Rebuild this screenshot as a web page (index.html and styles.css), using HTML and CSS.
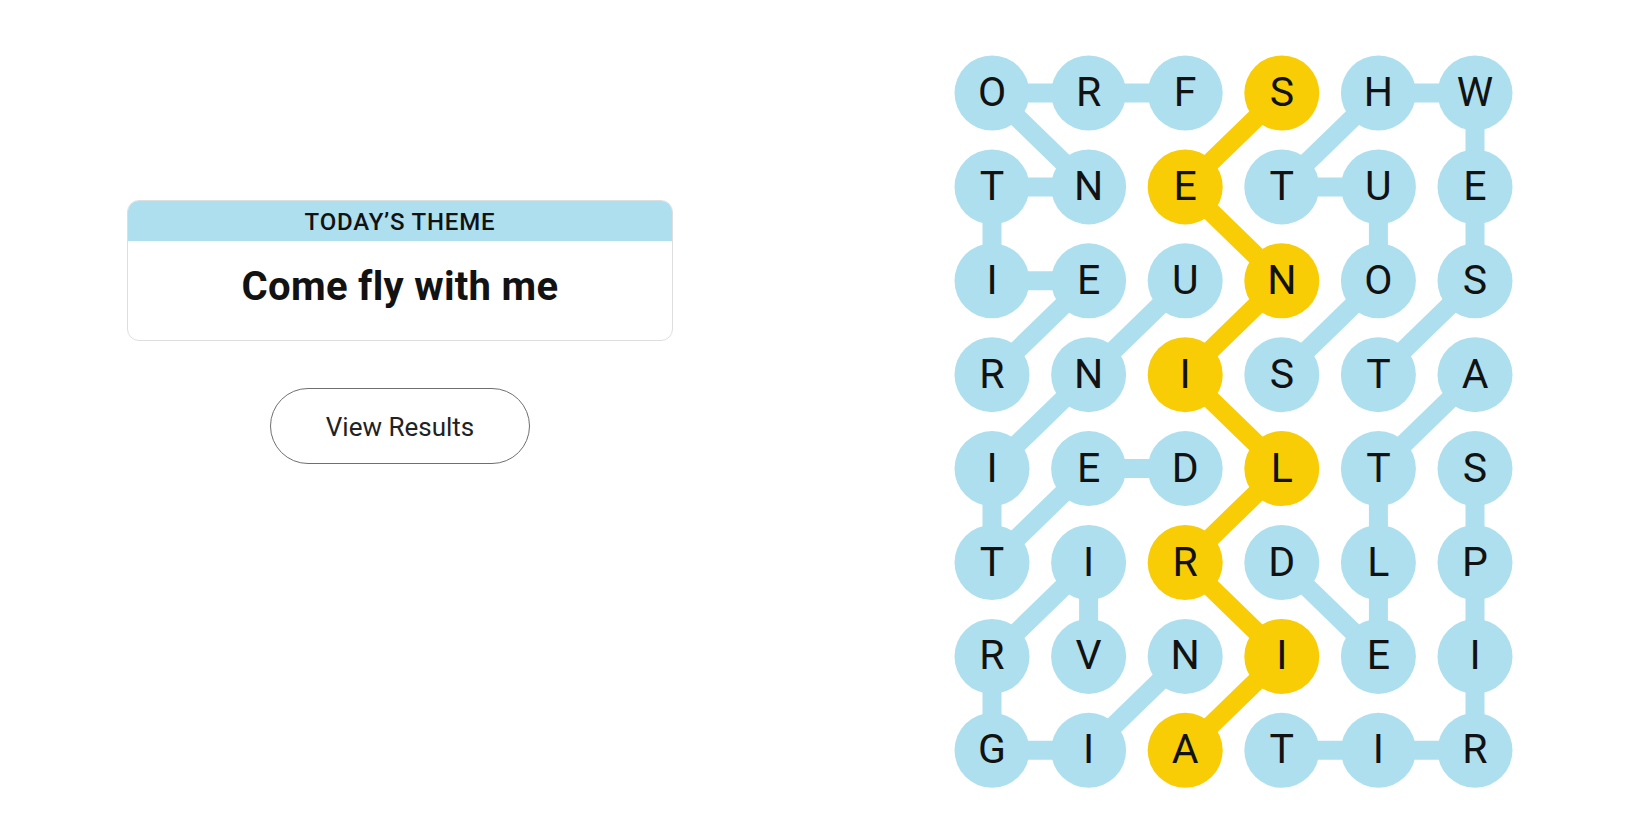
FILE: index.html
```html
<!DOCTYPE html>
<html lang="en">
<head>
    <meta charset="UTF-8">
    <meta name="viewport" content="width=device-width, initial-scale=1.0">
    <title>Strands</title>
    <link rel="stylesheet" href="styles.css">
</head>
<body>

    <div class="page">

        <div class="side">
            <div class="theme">
                <div class="theme-head">TODAY’S THEME</div>
                <div class="theme-body">Come fly with me</div>
            </div>
            <button class="results">View Results</button>
        </div>

        <svg class="board" width="567" height="740" viewBox="0 0 567 740">
            <!-- paths of found words -->
            <g class="path">
                <polyline points="235.2,41 138.6,41 42,41 138.6,134.9 42,134.9 42,228.8 138.6,228.8 42,322.7"/>
                <polyline points="235.2,228.8 138.6,322.7 42,416.6 42,510.5 138.6,416.6 235.2,416.6"/>
                <polyline points="138.6,604.4 138.6,510.5 42,604.4 42,698.3 138.6,698.3 235.2,604.4"/>
                <polyline points="331.8,322.7 428.4,228.8 428.4,134.9 331.8,134.9 428.4,41 525,41 525,134.9 525,228.8 428.4,322.7"/>
                <polyline points="525,416.6 525,510.5 525,604.4 525,698.3 428.4,698.3 331.8,698.3"/>
                <polyline points="331.8,510.5 428.4,604.4 428.4,510.5 428.4,416.6 525,322.7"/>
            </g>
            <g class="path span">
                <polyline points="235.2,698.3 331.8,604.4 235.2,510.5 331.8,416.6 235.2,322.7 331.8,228.8 235.2,134.9 331.8,41"/>
            </g>

            <g class="dots">
                <circle cx="42" cy="41" r="37.5"/>
                <circle cx="138.6" cy="41" r="37.5"/>
                <circle cx="235.2" cy="41" r="37.5"/>
                <circle class="span" cx="331.8" cy="41" r="37.5"/>
                <circle cx="428.4" cy="41" r="37.5"/>
                <circle cx="525" cy="41" r="37.5"/>

                <circle cx="42" cy="134.9" r="37.5"/>
                <circle cx="138.6" cy="134.9" r="37.5"/>
                <circle class="span" cx="235.2" cy="134.9" r="37.5"/>
                <circle cx="331.8" cy="134.9" r="37.5"/>
                <circle cx="428.4" cy="134.9" r="37.5"/>
                <circle cx="525" cy="134.9" r="37.5"/>

                <circle cx="42" cy="228.8" r="37.5"/>
                <circle cx="138.6" cy="228.8" r="37.5"/>
                <circle cx="235.2" cy="228.8" r="37.5"/>
                <circle class="span" cx="331.8" cy="228.8" r="37.5"/>
                <circle cx="428.4" cy="228.8" r="37.5"/>
                <circle cx="525" cy="228.8" r="37.5"/>

                <circle cx="42" cy="322.7" r="37.5"/>
                <circle cx="138.6" cy="322.7" r="37.5"/>
                <circle class="span" cx="235.2" cy="322.7" r="37.5"/>
                <circle cx="331.8" cy="322.7" r="37.5"/>
                <circle cx="428.4" cy="322.7" r="37.5"/>
                <circle cx="525" cy="322.7" r="37.5"/>

                <circle cx="42" cy="416.6" r="37.5"/>
                <circle cx="138.6" cy="416.6" r="37.5"/>
                <circle cx="235.2" cy="416.6" r="37.5"/>
                <circle class="span" cx="331.8" cy="416.6" r="37.5"/>
                <circle cx="428.4" cy="416.6" r="37.5"/>
                <circle cx="525" cy="416.6" r="37.5"/>

                <circle cx="42" cy="510.5" r="37.5"/>
                <circle cx="138.6" cy="510.5" r="37.5"/>
                <circle class="span" cx="235.2" cy="510.5" r="37.5"/>
                <circle cx="331.8" cy="510.5" r="37.5"/>
                <circle cx="428.4" cy="510.5" r="37.5"/>
                <circle cx="525" cy="510.5" r="37.5"/>

                <circle cx="42" cy="604.4" r="37.5"/>
                <circle cx="138.6" cy="604.4" r="37.5"/>
                <circle cx="235.2" cy="604.4" r="37.5"/>
                <circle class="span" cx="331.8" cy="604.4" r="37.5"/>
                <circle cx="428.4" cy="604.4" r="37.5"/>
                <circle cx="525" cy="604.4" r="37.5"/>

                <circle cx="42" cy="698.3" r="37.5"/>
                <circle cx="138.6" cy="698.3" r="37.5"/>
                <circle class="span" cx="235.2" cy="698.3" r="37.5"/>
                <circle cx="331.8" cy="698.3" r="37.5"/>
                <circle cx="428.4" cy="698.3" r="37.5"/>
                <circle cx="525" cy="698.3" r="37.5"/>
            </g>

            <g class="letters">
                <text x="42" y="54">O</text>
                <text x="138.6" y="54">R</text>
                <text x="235.2" y="54">F</text>
                <text x="331.8" y="54">S</text>
                <text x="428.4" y="54">H</text>
                <text x="525" y="54">W</text>

                <text x="42" y="147.9">T</text>
                <text x="138.6" y="147.9">N</text>
                <text x="235.2" y="147.9">E</text>
                <text x="331.8" y="147.9">T</text>
                <text x="428.4" y="147.9">U</text>
                <text x="525" y="147.9">E</text>

                <text x="42" y="241.8">I</text>
                <text x="138.6" y="241.8">E</text>
                <text x="235.2" y="241.8">U</text>
                <text x="331.8" y="241.8">N</text>
                <text x="428.4" y="241.8">O</text>
                <text x="525" y="241.8">S</text>

                <text x="42" y="335.7">R</text>
                <text x="138.6" y="335.7">N</text>
                <text x="235.2" y="335.7">I</text>
                <text x="331.8" y="335.7">S</text>
                <text x="428.4" y="335.7">T</text>
                <text x="525" y="335.7">A</text>

                <text x="42" y="429.6">I</text>
                <text x="138.6" y="429.6">E</text>
                <text x="235.2" y="429.6">D</text>
                <text x="331.8" y="429.6">L</text>
                <text x="428.4" y="429.6">T</text>
                <text x="525" y="429.6">S</text>

                <text x="42" y="523.5">T</text>
                <text x="138.6" y="523.5">I</text>
                <text x="235.2" y="523.5">R</text>
                <text x="331.8" y="523.5">D</text>
                <text x="428.4" y="523.5">L</text>
                <text x="525" y="523.5">P</text>

                <text x="42" y="617.4">R</text>
                <text x="138.6" y="617.4">V</text>
                <text x="235.2" y="617.4">N</text>
                <text x="331.8" y="617.4">I</text>
                <text x="428.4" y="617.4">E</text>
                <text x="525" y="617.4">I</text>

                <text x="42" y="711.3">G</text>
                <text x="138.6" y="711.3">I</text>
                <text x="235.2" y="711.3">A</text>
                <text x="331.8" y="711.3">T</text>
                <text x="428.4" y="711.3">I</text>
                <text x="525" y="711.3">R</text>
            </g>
        </svg>

    </div>

</body>
</html>
```

FILE: styles.css
```css
*{
    margin: 0;
    padding: 0;
    box-sizing: border-box;
}
body{
    background: #ffffff;
    color: #121212;
    font-family: Roboto, "Liberation Sans", sans-serif;
}
.page{
    display: flex;
    align-items: flex-start;
    gap: 277px;
    padding-left: 127px;
}
.side{
    width: 546px;
    margin-top: 200px;
    display: flex;
    flex-direction: column;
    align-items: center;
}
.theme{
    width: 100%;
    border: 1px solid #dedede;
    border-radius: 12px;
    overflow: hidden;
}
.theme-head{
    height: 40px;
    background: #aedfee;
    text-align: center;
    line-height: 43px;
    font-size: 24px;
    font-weight: 500;
    letter-spacing: 0.8px;
    color: #121212;
}
.theme-body{
    height: 99px;
    text-align: center;
    line-height: 92px;
    font-size: 40px;
    font-weight: 700;
    letter-spacing: 0.3px;
}
.results{
    margin-top: 47px;
    width: 260px;
    height: 76px;
    border: 1px solid #6f6f6f;
    border-radius: 38px;
    background: #ffffff;
    color: #222222;
    font-family: Roboto, "Liberation Sans", sans-serif;
    font-size: 26px;
    padding-top: 2px;
}
.board{
    display: block;
    margin-top: 52px;
}
.board .path polyline{
    fill: none;
    stroke: #aedfee;
    stroke-width: 19;
    stroke-linejoin: round;
    stroke-linecap: round;
}
.board .path.span polyline{
    stroke: #f8cd05;
}
.board .dots circle{
    fill: #aedfee;
}
.board .dots circle.span{
    fill: #f8cd05;
}
.board .letters text{
    font-family: Roboto, "Liberation Sans", sans-serif;
    font-size: 41px;
    fill: #121212;
    text-anchor: middle;
}
```
